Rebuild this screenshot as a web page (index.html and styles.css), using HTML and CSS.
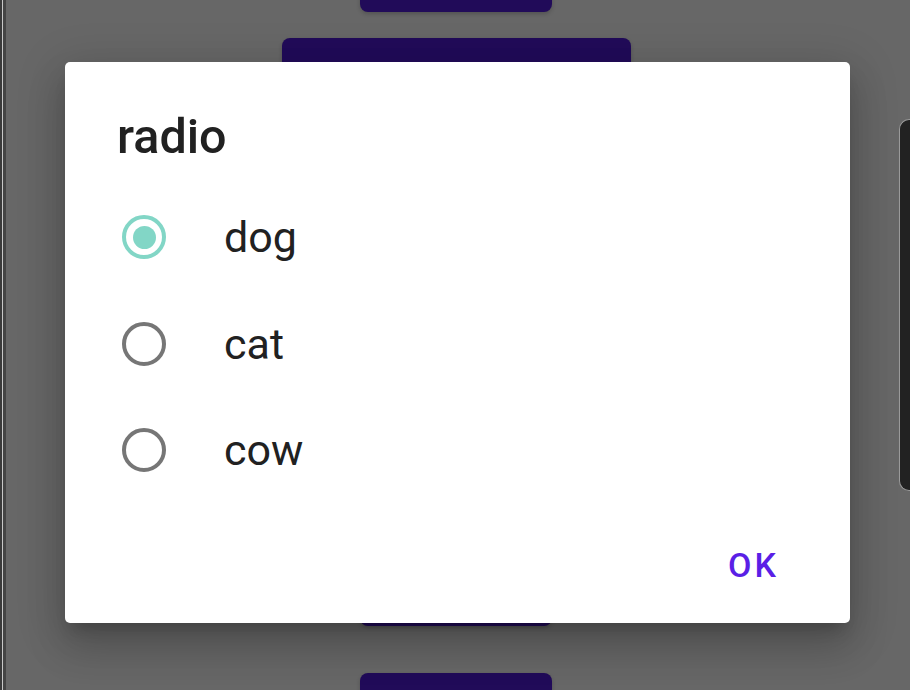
FILE: index.html
```html
<!DOCTYPE html>
<html>
<head>
    <title>radio</title>
    <link rel="stylesheet" href="styles.css">
</head>
<body>
    <div class="page">
        <!-- device frame edge -->
        <div class="edge"></div>

        <!-- buttons behind the dialog -->
        <div class="stack">
            <div class="btn btn-first"></div>
            <div class="btn btn-wide"></div>
            <div class="btn btn-hidden"></div>
            <div class="btn btn-last"></div>
        </div>
    </div>

    <div class="side-key"></div>

    <!-- Single choice dialog -->
    <div class="dialog">
        <h2 class="dialog-title">radio</h2>
        <div class="choices">
            <label class="choice">
                <span class="radio checked"></span>
                <span class="choice-text">dog</span>
            </label>
            <label class="choice">
                <span class="radio"></span>
                <span class="choice-text">cat</span>
            </label>
            <label class="choice">
                <span class="radio"></span>
                <span class="choice-text">cow</span>
            </label>
        </div>
        <div class="actions">
            <button type="button" class="ok">OK</button>
        </div>
    </div>
</body>
</html>
```

FILE: styles.css
```css
html, body {
    margin: 0;
    height: 100%;
    overflow: hidden;
}

body {
    background-color: #676767; /* dimmed screen */
    font-family: Roboto, "Liberation Sans", sans-serif;
}

.page {
    display: flex;
    height: 100%;
    overflow: hidden;
}

.edge {
    width: 6px;
    flex-shrink: 0;
    background: linear-gradient(to right, #3a3a3a 0 2px, #c8c8c8 2px 3px, #444 3px 6px);
}

.stack {
    flex: 1;
    display: flex;
    flex-direction: column;
    align-items: center;
    margin-top: -40px;
    padding-right: 4px;
}

.btn {
    background: #210b59;
    border-radius: 8px;
    width: 192px;
    height: 52px;
    box-shadow: 0px 2px 4px rgba(0, 0, 0, 0.2);
    flex-shrink: 0;
}

.btn-wide {
    width: 349px;
    height: 90px;
    margin-top: 26px;
}

.btn-hidden {
    margin-top: 446px;
}

.btn-last {
    height: 17px;
    margin-top: 47px;
    border-radius: 8px 8px 0 0;
}

/* hardware key on the right side */
.side-key {
    position: absolute;
    top: 119px;
    right: 0;
    width: 10px;
    height: 370px;
    background: #222;
    border: 1px solid #9a9a9a;
    border-right: none;
    border-radius: 10px 0 0 10px;
}

.dialog {
    position: absolute;
    top: 62px;
    left: 65px;
    width: 785px;
    height: 561px;
    box-sizing: border-box;
    padding: 47px 0 37px 52px;
    background: #fff;
    border-radius: 5px;
    box-shadow: 0px 11px 15px -7px rgba(0, 0, 0, 0.2),
                0px 24px 38px 3px rgba(0, 0, 0, 0.14),
                0px 9px 46px 8px rgba(0, 0, 0, 0.12);
    display: flex;
    flex-direction: column;
}

.dialog-title {
    margin: 0;
    font-size: 48.5px;
    font-weight: 500;
    color: #212121;
    line-height: 1.172;
}

.choices {
    margin-top: 18px;
    display: flex;
    flex-direction: column;
}

.choice {
    display: flex;
    align-items: center;
    height: 106.5px;
}

.radio {
    width: 44px;
    height: 44px;
    box-sizing: border-box;
    margin-left: 5px;
    border: 4px solid #767676;
    border-radius: 50%;
    display: flex;
    justify-content: center;
    align-items: center;
}

.radio.checked {
    border-color: #82d6c6;
}

.radio.checked::after {
    content: "";
    width: 23px;
    height: 23px;
    border-radius: 50%;
    background: #82d6c6;
}

.choice-text {
    margin-left: 58px;
    font-size: 43px;
    color: #212121;
}

.actions {
    margin-top: auto;
    display: flex;
    justify-content: flex-end;
    padding-right: 71px;
}

.ok {
    background: none;
    border: none;
    padding: 0;
    font-family: inherit;
    font-size: 34px;
    font-weight: 500;
    letter-spacing: 3px;
    color: #5a1fe6;
    line-height: 1.172;
    cursor: pointer;
}
```
